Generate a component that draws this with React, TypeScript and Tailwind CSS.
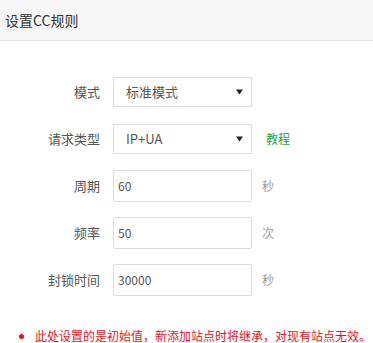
import React from 'react';

const font = { fontFamily: '"Microsoft YaHei", "Noto Sans CJK SC", "Noto Sans", sans-serif' };

const FakeSelect: React.FC<{ value: string }> = ({ value }) => (
  <div className="flex items-center justify-between w-[139px] h-[30px] border border-[#dcdcdc] bg-white pl-3 pr-[8px] text-[13px] text-[#555]">
    <span>{value}</span>
    <svg width="7" height="6" viewBox="0 0 7 6">
      <path d="M0 0.5 H7 L3.5 5.5 Z" fill="#222" />
    </svg>
  </div>
);

const Field: React.FC<{ value: string }> = ({ value }) => (
  <input
    readOnly
    value={value}
    className="w-[139px] h-[32px] border border-[#dcdcdc] rounded-[2px] bg-white px-[4px] text-[12px] text-[#555] outline-none"
    style={font}
  />
);

const Row: React.FC<{ label: string; children: React.ReactNode }> = ({ label, children }) => (
  <div className="flex items-center h-[47px]">
    <div className="w-[100px] text-right text-[13px] text-[#555]">{label}</div>
    <div className="ml-[13px] flex items-center">{children}</div>
  </div>
);

export default function App() {
  return (
    <div className="w-[373px] h-[343px] bg-white overflow-hidden" style={font}>
      <div className="h-[41px] bg-[#f6f6f6] border-b border-[#e6e6e6] flex items-center pl-[5px] text-[14px] text-[#333]">
        设置CC规则
      </div>
      <div className="pt-[27px]">
        <Row label="模式">
          <FakeSelect value="标准模式" />
        </Row>
        <Row label="请求类型">
          <FakeSelect value="IP+UA" />
          <span className="ml-[14px] text-[12px] text-[#20a53a]">教程</span>
        </Row>
        <Row label="周期">
          <Field value="60" />
          <span className="ml-[10px] text-[12px] text-[#999]">秒</span>
        </Row>
        <Row label="频率">
          <Field value="50" />
          <span className="ml-[10px] text-[12px] text-[#999]">次</span>
        </Row>
        <Row label="封锁时间">
          <Field value="30000" />
          <span className="ml-[10px] text-[12px] text-[#999]">秒</span>
        </Row>
      </div>
      <div className="mt-[24px] flex items-center pl-[19px] text-[12px] text-[#e5141b]">
        <span className="w-[5px] h-[5px] rounded-full bg-[#e5141b]" />
        <span className="ml-[11px]">此处设置的是初始值，新添加站点时将继承，对现有站点无效。</span>
      </div>
    </div>
  );
}
